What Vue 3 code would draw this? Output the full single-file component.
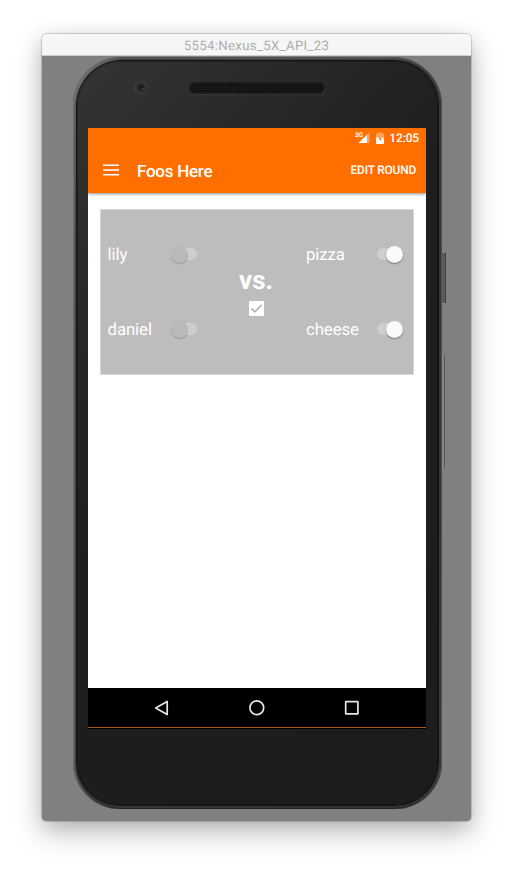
<script setup>
const leftPlayers = ['lily', 'daniel']
const rightPlayers = ['pizza', 'cheese']
</script>

<template>
  <main class="desktop">
    <section class="window">
      <header class="titlebar"><span>5554:Nexus_5X_API_23</span></header>
      <div class="backdrop">
        <i class="key power"></i>
        <i class="key volume"></i>
        <div class="phone">
          <div class="face">
            <div class="top-bezel">
              <i class="camera"></i>
              <i class="speaker"></i>
            </div>
            <div class="screen">
              <div class="header">
                <div class="status">
                  <svg class="signal" width="15" height="13" viewBox="0 0 15 13">
                    <path d="M14.5 1V12H3.5Z" fill="#fff" opacity=".35" />
                    <path d="M12 3.8V12H3.5L7.5 8V7H9Z" fill="#fff" />
                    <text x="0" y="6">3G</text>
                  </svg>
                  <svg class="battery" width="8" height="12" viewBox="0 0 8 12">
                    <path d="M2.5 0h3v1.2H8V6H0V1.2h2.5z" fill="#fff" opacity=".35" />
                    <path d="M0 5.5h8v5.7a.8.8 0 0 1-.8.8H.8a.8.8 0 0 1-.8-.8z" fill="#fff" />
                    <path d="M4.6 4.4 2.4 7h1.4v2.2L5.9 6.4H4.6z" fill="#ff6f00" />
                  </svg>
                  <span class="time">12:05</span>
                </div>
                <div class="toolbar">
                  <svg width="16" height="12" viewBox="0 0 16 12">
                    <path d="M0 1.2H16M0 6H16M0 10.8H16" stroke="#fff" stroke-width="1.6" />
                  </svg>
                  <h1>Foos Here</h1>
                  <span class="action">EDIT ROUND</span>
                </div>
              </div>
              <div class="content">
                <div class="card">
                  <div class="team left">
                    <div v-for="name in leftPlayers" :key="name" class="player">
                      <span>{{ name }}</span><i class="switch"></i>
                    </div>
                  </div>
                  <div class="versus">
                    <strong>vs.</strong>
                    <svg width="15" height="15" viewBox="0 0 15 15">
                      <rect width="15" height="15" rx="1.3" fill="#fff" />
                      <path d="M2.4 7.4 5.8 10.8 12.7 3.9" fill="none" stroke="#b5b5b5" stroke-width="1.7" />
                    </svg>
                  </div>
                  <div class="team right">
                    <div v-for="name in rightPlayers" :key="name" class="player">
                      <span>{{ name }}</span><i class="switch on"></i>
                    </div>
                  </div>
                </div>
              </div>
              <nav class="navbar">
                <svg width="16" height="16" viewBox="0 0 16 16"><path d="M1.7 8 13.2 1.4V14.6Z" /></svg>
                <svg width="16" height="16" viewBox="0 0 16 16"><circle cx="7.8" cy="7.8" r="6.9" /></svg>
                <svg width="16" height="16" viewBox="0 0 16 16"><rect x="1.7" y="1.7" width="12.2" height="12.2" rx=".4" /></svg>
              </nav>
            </div>
            <div class="bottom-bezel"><i class="speaker"></i></div>
          </div>
        </div>
      </div>
    </section>
  </main>
</template>

<style>
body {
  background: #fff;
}
</style>

<style scoped>
* {
  box-sizing: border-box;
}
.desktop {
  height: 871px;
  padding: 34px 42px 50px;
  overflow: hidden;
  font-family: Roboto, sans-serif;
  text-rendering: geometricPrecision;
}
.window {
  width: 429px;
  height: 787px;
  border-radius: 5px 5px 4px 4px;
  box-shadow: 0 0 1px 1px rgba(0, 0, 0, 0.17), 0 11px 28px rgba(0, 0, 0, 0.27), 0 3px 20px rgba(0, 0, 0, 0.08);
}
.titlebar {
  height: 22px;
  background: #f6f6f6;
  border-bottom: 1px solid #cfcfcf;
  border-radius: 5px 5px 0 0;
  display: flex;
  align-items: flex-start;
  justify-content: center;
  font: 13.2px/22px Roboto, sans-serif;
  letter-spacing: 0.35px;
  color: #adadad;
}
.titlebar span {
  padding-top: 2px;
}
.backdrop {
  position: relative;
  height: 765px;
  padding: 1px 0 0 31px;
  background: #808080;
  border-radius: 0 0 4px 4px;
}
.key {
  position: absolute;
  left: 399px;
}
.power {
  top: 197px;
  width: 5px;
  height: 50px;
  background: #5f5b5b;
  border-right: 1px solid #3f3b3b;
}
.volume {
  top: 299px;
  width: 4px;
  height: 112px;
  background: #858585;
  border-right: 1px solid #555;
}
.phone {
  position: relative;
  width: 369px;
  height: 752px;
  padding: 4px;
  border-radius: 49px 49px 47px 47px;
  background: linear-gradient(100deg, #555 0%, #3a3a3a 8%, #353535 90%, #3c3838 100%);
  box-shadow: inset 1px 0 1px #6d6d6d, inset 0 1px 1px #4d4d4d, inset -1px 0 1px #555, inset 3px 3px 3px -2px #858585, inset 0 -1px 1px #151515;
}
.face {
  height: 744px;
  padding: 0 12px 0 11px;
  border-radius: 45px 45px 43px 43px;
  background: linear-gradient(130deg, #343435 0, #29292a 22%, #1e1e1e 45%, #1c1c1c 100%);
  box-shadow: 0 0 0 1px #141414, inset 0 0 1px 1px rgba(0, 0, 0, 0.25);
}
.top-bezel {
  height: 67px;
  padding: 19px 0 0 45px;
  display: flex;
  align-items: flex-start;
}
.camera {
  width: 15px;
  height: 15px;
  border-radius: 50%;
  background: radial-gradient(circle at 9.5px 9px, #68505f 0, #68505f 0.4px, transparent 1.3px),
    radial-gradient(circle at 8px 7.5px, #1b1a22 0, #211f29 3px, #363537 4.7px, #373738 7px);
}
.speaker {
  width: 136px;
  height: 12px;
  border-radius: 6px;
  background: radial-gradient(circle, #090909 0.8px, transparent 1.2px) 2px 2px / 2.8px 2.8px, #1d1d1d;
  box-shadow: inset 0 0 0 1px #1d1d1d, 1px 1px 1px rgba(85, 85, 85, 0.3);
}
.top-bezel .speaker {
  margin-left: 41px;
  margin-top: 2px;
}
.bottom-bezel {
  padding: 43px 0 0 101px;
}
.screen {
  width: 338px;
  height: 601px;
  display: flex;
  flex-direction: column;
  background: #fff;
  color: #fff;
}
.header {
  position: relative;
  height: 65px;
  background: #ff6f00;
  box-shadow: 0 1px 3px rgba(0, 0, 0, 0.45);
  clip-path: inset(0 0 -6px 0);
}
.status {
  height: 20px;
  padding-right: 7px;
  display: flex;
  align-items: center;
  justify-content: flex-end;
}
.signal {
  margin: 0 6px 1px 0;
}
.signal text {
  font: 700 6.4px Roboto, sans-serif;
  letter-spacing: -0.2px;
  fill: #fff;
}
.battery {
  margin: 0 5px 1px 0;
}
.time {
  font: 500 12px/20px Roboto, sans-serif;
  letter-spacing: -0.15px;
}
.toolbar {
  height: 44px;
  padding: 0 10px 0 15px;
  display: flex;
  align-items: center;
}
.toolbar h1 {
  margin: 4px 0 0 18px;
  font: 500 17px/25px Roboto, sans-serif;
  letter-spacing: -0.25px;
}
.action {
  margin-left: auto;
  font: 500 11.9px/20px Roboto, sans-serif;
  letter-spacing: -0.18px;
}
.content {
  flex: 1;
  padding: 16px 12px;
}
.card {
  width: 313.5px;
  height: 166px;
  border: 1px solid #d6d6d6;
  background: #bdbdbd;
  display: flex;
}
.team {
  padding-top: 32px;
  display: flex;
  flex-direction: column;
  gap: 51px;
}
.left {
  width: 103px;
  padding-left: 6.5px;
}
.right {
  width: 104.5px;
  padding-right: 8px;
}
.player {
  height: 24px;
  display: flex;
  align-items: center;
  justify-content: space-between;
  font-size: 16.8px;
  line-height: 24px;
  letter-spacing: -0.08px;
}
.player span {
  padding-top: 2px;
}
.switch {
  height: 18px;
  display: flex;
  align-items: center;
}
.switch::before {
  content: '';
  width: 26px;
  height: 12px;
  border-radius: 6px;
  background: #cecece;
}
.switch::after {
  content: '';
  width: 17px;
  height: 17px;
  margin-left: -26px;
  border-radius: 50%;
  background: #b9b9b9;
  box-shadow: 0 1px 1px rgba(0, 0, 0, 0.2);
}
.left .switch {
  width: 27px;
  margin-right: 6px;
}
.right .switch {
  width: 26px;
}
.on::after {
  margin-left: -16px;
  flex: none;
  background: #fafafa;
  box-shadow: 0 1px 1.5px rgba(0, 0, 0, 0.38);
}
.versus {
  width: 102px;
  padding: 56px 0 0 2px;
  display: flex;
  flex-direction: column;
  align-items: center;
}
.versus strong {
  font: 700 26px/30px Roboto, sans-serif;
}
.versus svg {
  margin-top: 5px;
}
.navbar {
  height: 41px;
  padding: 0 66px 2px;
  display: flex;
  align-items: center;
  justify-content: space-between;
  background: linear-gradient(#000 39px, #a8571b 39px, #a8571b 40px, #000 40px);
}
.navbar path,
.navbar circle,
.navbar rect {
  fill: none;
  stroke: #e6e6e6;
  stroke-width: 1.7;
  stroke-linejoin: round;
}
</style>
